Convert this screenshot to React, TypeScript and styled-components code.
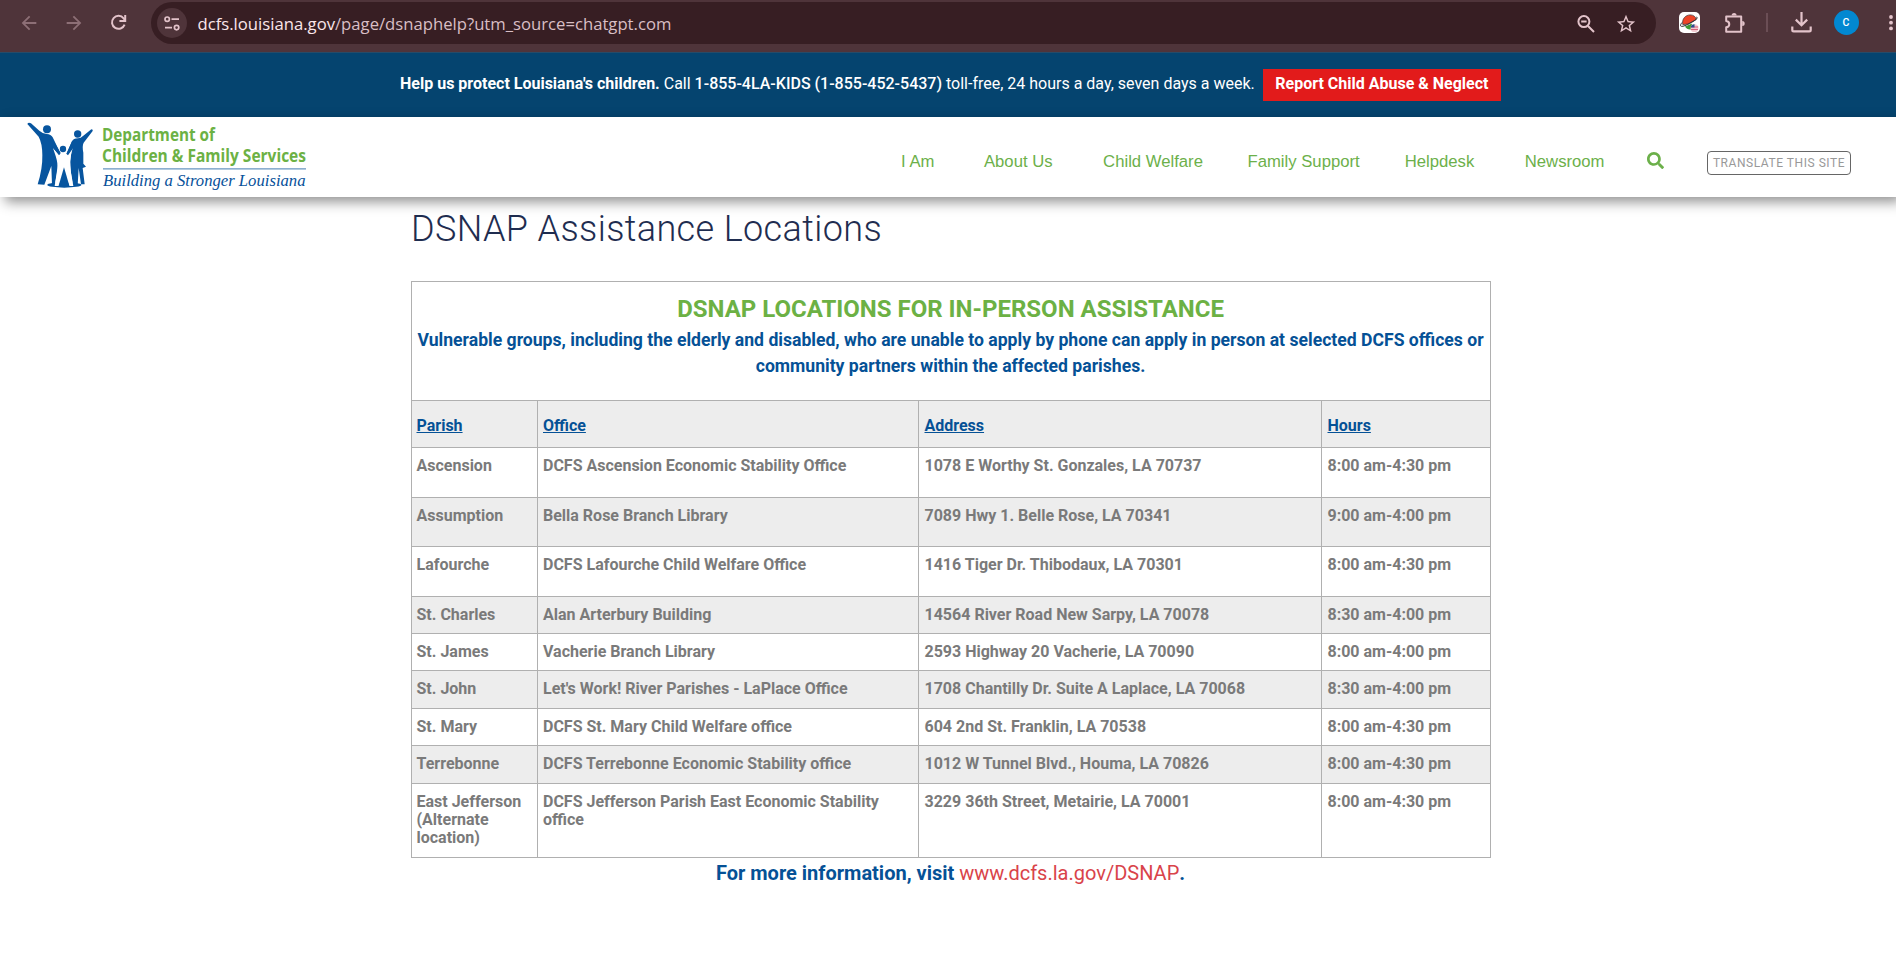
import React from "react";
import styled, { createGlobalStyle } from "styled-components";
import { MdArrowBack, MdArrowForward, MdStarBorder } from "react-icons/md";
import { FaSearch } from "react-icons/fa";

const GlobalStyle = createGlobalStyle`
  * { box-sizing: border-box; }
  html, body { margin: 0; background: #fff; overflow: hidden; }
  body { font-family: Roboto, "Liberation Sans", sans-serif; font-size: 16px; }
  a { text-decoration: none; color: inherit; }
`;

const Page = styled.div`
  height: 958px;
  display: flex;
  flex-direction: column;
  overflow: hidden;
`;

/* Browser toolbar */
const BrowserBar = styled.div`
  flex: none;
  display: flex;
  height: 52px;
  padding: 2px 0 0 6px;
  background: #4f343a;
  color: #e3c3ca;
  overflow: hidden;
`;

const ToolSlot = styled.div<{ $width?: number; $dim?: boolean }>`
  flex: none;
  width: ${(p) => p.$width ?? 45}px;
  height: 41px;
  display: flex;
  align-items: center;
  justify-content: center;
  color: ${(p) => (p.$dim ? "#8d6f76" : "inherit")};
`;

const AddressBar = styled.div`
  flex: none;
  width: 1505px;
  height: 42px;
  margin: 0 10px;
  padding: 0 19px 0 6px;
  border-radius: 21px;
  background: #371e23;
  display: flex;
  align-items: center;
`;

const SiteInfo = styled.span`
  width: 30px;
  height: 30px;
  border-radius: 50%;
  background: #4f343a;
  display: grid;
  place-items: center;
`;

const Url = styled.span`
  flex: 1;
  margin-left: 10.5px;
  padding-top: 1px;
  font: 16.68px/24px "Open Sans", "Noto Sans", sans-serif;
  color: #d9bfc5;
  b { font-weight: 400; color: #fbe6ea; }
`;

const AddressActions = styled.span`
  display: flex;
  align-items: center;
  gap: 20px;
  padding-top: 1px;
`;

const Divider = styled.span`
  width: 2px;
  height: 19px;
  background: #6b4e55;
`;

const Avatar = styled.span`
  width: 25px;
  height: 25px;
  border-radius: 50%;
  background: #0288d1;
  color: #fff;
  font-size: 10.5px;
  font-weight: 500;
  line-height: 25px;
  text-align: center;
`;

/* Hotline banner */
const Banner = styled.div`
  flex: none;
  height: 65px;
  border-top: 1px solid #274b68;
  background: #05446f;
  color: #fff;
  display: flex;
  justify-content: center;
  align-items: flex-start;
  padding-top: 16px;
  padding-left: 5px;
  line-height: 19px;
  white-space: nowrap;
`;

const BannerText = styled.p`
  margin: 5px 8px 0 0;
  b { font-weight: 700; }
  strong { font-weight: 500; }
`;

const ReportButton = styled.a`
  height: 32px;
  padding: 5px 12.5px 0;
  background: #e21b1b;
  font-weight: 700;
`;

/* Site header */
const Header = styled.header`
  flex: none;
  position: relative;
  height: 80px;
  display: flex;
  justify-content: space-between;
  background: #fff;
  box-shadow: 5px 5px 12px rgba(0, 0, 0, 0.43);
`;

const Nav = styled.nav`
  display: flex;
  align-items: flex-start;
  padding: 33px 45px 0 0;
  font: 16.7px/24px "Liberation Sans", Arial, sans-serif;
  color: #6cb04a;
`;

const NavLink = styled.a<{ $gap: number }>`
  margin-right: ${(p) => p.$gap}px;
`;

const SearchButton = styled.a`
  margin: 2px 43px 0 0;
  height: 17px;
  svg { display: block; }
`;

const Translate = styled.button`
  width: 144px;
  height: 24px;
  margin-top: 1px;
  padding: 0;
  border: 1px solid #666;
  border-radius: 4px;
  background: #fff;
  color: #999;
  font: 12px/22px Roboto, sans-serif;
  letter-spacing: 0.55px;
  white-space: nowrap;
`;

/* Page content */
const Content = styled.main`
  width: 1080px;
  margin-left: 411px;
`;

const Title = styled.h1`
  margin: 10px 0 0;
  height: 74px;
  font-size: 36px;
  font-weight: 300;
  line-height: 44px;
  letter-spacing: 0.38px;
  color: #1f2d50;
`;

const Table = styled.table`
  width: 1080px;
  table-layout: fixed;
  border-collapse: collapse;
  font-weight: 700;
  line-height: 18px;
  color: #7a7a7a;
  td, th { border: 1px solid #b0b0b0; }
`;

const IntroCell = styled.th`
  height: 119px;
  padding: 11px 5px 0 4px;
  vertical-align: top;
  text-align: center;
`;

const IntroHeading = styled.div`
  font-size: 24px;
  line-height: 32px;
  color: #6cb144;
`;

const IntroText = styled.div`
  margin: 2px -1px 0;
  font-size: 17.6px;
  line-height: 26px;
  color: #055196;
`;

const Row = styled.tr<{ $height: number; $shaded: boolean }>`
  height: ${(p) => p.$height}px;
  background: ${(p) => (p.$shaded ? "#ededed" : "#fff")};
`;

const HeadCell = styled.th`
  padding: 16px 4px 0 4.5px;
  text-align: left;
  vertical-align: top;
  text-decoration: underline;
  color: #055196;
  &:nth-child(2) { padding-left: 5px; }
  &:nth-child(n + 3) { padding-left: 5.5px; }
`;

const Cell = styled.td`
  padding: 9px 4px 0 4.5px;
  vertical-align: top;
  &:nth-child(2) { padding-left: 5px; }
  &:nth-child(n + 3) { padding-left: 5.5px; }
`;

const MoreInfo = styled.p`
  margin: 1px 1px 0 0;
  font-size: 20px;
  font-weight: 700;
  line-height: 28px;
  text-align: center;
  color: #055196;
  a { font-weight: 400; color: #d9434a; }
`;

type Location = [number, string, string, string, string];

const locations: Location[] = [
  [50, "Ascension", "DCFS Ascension Economic Stability Office", "1078 E Worthy St. Gonzales, LA 70737", "8:00 am-4:30 pm"],
  [49, "Assumption", "Bella Rose Branch Library", "7089 Hwy 1. Belle Rose, LA 70341", "9:00 am-4:00 pm"],
  [50, "Lafourche", "DCFS Lafourche Child Welfare Office", "1416 Tiger Dr. Thibodaux, LA 70301", "8:00 am-4:30 pm"],
  [37, "St. Charles", "Alan Arterbury Building", "14564 River Road New Sarpy, LA 70078", "8:30 am-4:00 pm"],
  [37, "St. James", "Vacherie Branch Library", "2593 Highway 20 Vacherie, LA 70090", "8:00 am-4:00 pm"],
  [38, "St. John", "Let's Work! River Parishes - LaPlace Office", "1708 Chantilly Dr. Suite A Laplace, LA 70068", "8:30 am-4:00 pm"],
  [37, "St. Mary", "DCFS St. Mary Child Welfare office", "604 2nd St. Franklin, LA 70538", "8:00 am-4:30 pm"],
  [38, "Terrebonne", "DCFS Terrebonne Economic Stability office", "1012 W Tunnel Blvd., Houma, LA 70826", "8:00 am-4:30 pm"],
  [74, "East Jefferson (Alternate location)", "DCFS Jefferson Parish East Economic Stability office", "3229 36th Street, Metairie, LA 70001", "8:00 am-4:30 pm"],
];

const navItems: [string, number][] = [
  ["I Am", 49.5],
  ["About Us", 50.5],
  ["Child Welfare", 44.5],
  ["Family Support", 45],
  ["Helpdesk", 50.5],
  ["Newsroom", 42.5],
];

const ReloadIcon = () => (
  <svg width="17" height="17" viewBox="0 0 17 17" fill="none" stroke="currentColor" strokeWidth="2">
    <path d="M14.6 10.6A6.5 6.5 0 1 1 13.6 4.3L15 6" />
    <path d="M15.2 1v6H9.4" />
  </svg>
);

const TuneIcon = () => (
  <svg width="16" height="15" viewBox="0 0 16 15" fill="none" stroke="currentColor" strokeWidth="1.7">
    <circle cx="3.2" cy="3.2" r="2.2" />
    <path d="M7.5 3.2H15M1 11.6h7" />
    <circle cx="12.6" cy="11.6" r="2.2" />
  </svg>
);

const ZoomOutIcon = () => (
  <svg width="18" height="18" viewBox="0 0 18 18" fill="none" stroke="currentColor" strokeWidth="2">
    <circle cx="6.9" cy="6.6" r="5.5" />
    <path d="M11 11l6 6M4.2 6.6h5.4" />
  </svg>
);

const PlanetIcon = () => (
  <svg width="21" height="21" viewBox="0 0 21 21">
    <rect width="21" height="21" rx="5" fill="#fff" />
    <path d="M6 14.500a6 6 0 0 0 6 3l1-6z" fill="#3f9b35" />
    <path d="M3.800 12.600C2.600 7 6.500 2.800 11.500 2.900c3 .1 5.200 1.900 5.800 4.500L9 12z" fill="#ee4427" stroke="#332d2d" strokeWidth=".7" />
    <path d="M3 10.500C-.5 15 2.500 15.500 8.500 12.500 15 9.500 20.500 5.500 17.300 5.100" fill="none" stroke="#2b2b30" strokeWidth="1" />
    <circle cx="15.500" cy="16.200" r="3.900" fill="#f2c9d0" />
    <path d="M12 15h7.200M12 17.500h7" stroke="#d9607a" strokeWidth="1" />
    <path d="M11.700 15.600a3.900 3.900 0 0 1 3.800-3.300v3.300z" fill="#28508e" />
  </svg>
);

const PuzzleIcon = () => (
  <svg width="22" height="22" viewBox="0 0 22 22" fill="none" stroke="currentColor" strokeWidth="2" strokeLinejoin="round">
    <path d="M2.200 4.400H17.200V19.800H2.200V15.300C6.300 14.800 6.300 9.600 2.200 9.100Z" />
    <path d="M7.600 3.500a2.500 2.500 0 0 1 5 0zM18.200 9.100a2.500 2.500 0 0 1 0 5z" fill="currentColor" stroke="none" />
  </svg>
);

const DownloadIcon = () => (
  <svg width="21" height="21" viewBox="0 0 21 21" fill="none" stroke="currentColor" strokeWidth="2.200">
    <path d="M10.500 0v13M4.800 7.600l5.700 5.700 5.700-5.700M1.300 14.500v3.400q0 1.400 1.400 1.400h15.600q1.400 0 1.400-1.400v-3.400" />
  </svg>
);

const DotsIcon = () => (
  <svg width="6" height="18" viewBox="0 0 6 18" fill="currentColor">
    <circle cx="3" cy="3" r="1.900" />
    <circle cx="3" cy="8.700" r="1.900" />
    <circle cx="3" cy="14.400" r="1.900" />
  </svg>
);

const LogoMark = styled.svg`
  display: block;
  overflow: visible;
`;

const Logo = () => (
  <LogoMark width="320" height="80" viewBox="0 0 320 80">
    <g transform="translate(20 -1.700) scale(.33333)" fill="#07559f">
      <ellipse cx="133" cy="209" rx="51" ry="8" />
      <circle cx="81" cy="42" r="12" />
      <path d="M22 26Q25 20 33 24L58 46Q68 55 80 56 93 57 98 66L121 113 118 119 109 113 113 130Q117 150 105 206L96 207 94 152 73 208 53 207Q68 160 67 120 67 84 56 64Z" />
      <circle cx="173" cy="56" r="11" />
      <path d="M214 42Q220 42 218 47L191 82Q186 92 190 112L190 145 198 154 188 158 194 207 183 207 176 158 173 210 158 207Q151 170 151 140L154 108 145 118 140 115 156 78Q160 69 174 69 182 69 190 61Z" />
      <path d="M99 98L116 117Q129 124 142 117L158 99 152 123Q147 142 151 160L160 212 147 212 132 156 117 212 104 212 112 160Q114 144 107 122Z" fill="#fff" />
      <path d="M100 76L122 113 117 120 97 94ZM156 78L158 100 144 120 139 115Z" />
      <circle cx="129" cy="101" r="9.500" />
      <path d="M132 156L149 214H115Z" />
    </g>
    <g fill="#6cb144" fontFamily="Open Sans, Noto Sans, sans-serif" fontWeight="700" fontSize="18">
      <text x="102" y="23.500" textLength="113" lengthAdjust="spacingAndGlyphs">Department of</text>
      <text x="102" y="45" textLength="204" lengthAdjust="spacingAndGlyphs">Children &amp; Family Services</text>
    </g>
    <path d="M103 51.900H306" stroke="#6795c0" strokeWidth="1.200" />
    <text x="103" y="69" fill="#07519a" fontFamily="Liberation Serif, serif" fontStyle="italic" fontSize="17.500" textLength="202.500" lengthAdjust="spacingAndGlyphs">Building a Stronger Louisiana</text>
  </LogoMark>
);

export default function App() {
  return (
    <Page>
      <GlobalStyle />
      <BrowserBar>
        <ToolSlot $dim><MdArrowBack size={22} /></ToolSlot>
        <ToolSlot $dim><MdArrowForward size={22} /></ToolSlot>
        <ToolSlot><ReloadIcon /></ToolSlot>
        <AddressBar>
          <SiteInfo><TuneIcon /></SiteInfo>
          <Url><b>dcfs.louisiana.gov</b>/page/dsnaphelp?utm_source=chatgpt.com</Url>
          <AddressActions>
            <ZoomOutIcon />
            <MdStarBorder size={22} />
          </AddressActions>
        </AddressBar>
        <ToolSlot $width={46}><PlanetIcon /></ToolSlot>
        <ToolSlot $width={46}><PuzzleIcon /></ToolSlot>
        <ToolSlot $width={17}><Divider /></ToolSlot>
        <ToolSlot $width={52}><DownloadIcon /></ToolSlot>
        <ToolSlot $width={38}><Avatar>C</Avatar></ToolSlot>
        <ToolSlot $width={52}><DotsIcon /></ToolSlot>
      </BrowserBar>
      <Banner>
        <BannerText>
          <b>Help us protect Louisiana's children.</b> Call <strong>1-855-4LA-KIDS (1-855-452-5437)</strong> toll-free, 24 hours a day, seven days a week.
        </BannerText>
        <ReportButton>Report Child Abuse &amp; Neglect</ReportButton>
      </Banner>
      <Header>
        <Logo />
        <Nav>
          {navItems.map(([label, gap]) => (
            <NavLink key={label} $gap={gap}>{label}</NavLink>
          ))}
          <SearchButton><FaSearch size={17} /></SearchButton>
          <Translate>TRANSLATE THIS SITE</Translate>
        </Nav>
      </Header>
      <Content>
        <Title>DSNAP Assistance Locations</Title>
        <Table>
          <colgroup>
            <col width="126" />
            <col width="381" />
            <col width="403" />
            <col width="169" />
          </colgroup>
          <tbody>
            <tr>
              <IntroCell colSpan={4}>
                <IntroHeading>DSNAP LOCATIONS FOR IN-PERSON ASSISTANCE</IntroHeading>
                <IntroText>
                  Vulnerable groups, including the elderly and disabled, who are unable to apply by phone can apply in person at selected DCFS offices or community partners within the affected parishes.
                </IntroText>
              </IntroCell>
            </tr>
            <Row $height={47} $shaded>
              <HeadCell>Parish</HeadCell>
              <HeadCell>Office</HeadCell>
              <HeadCell>Address</HeadCell>
              <HeadCell>Hours</HeadCell>
            </Row>
            {locations.map(([height, parish, office, address, hours], i) => (
              <Row key={parish} $height={height} $shaded={i % 2 === 1}>
                <Cell>{parish}</Cell>
                <Cell>{office}</Cell>
                <Cell>{address}</Cell>
                <Cell>{hours}</Cell>
              </Row>
            ))}
          </tbody>
        </Table>
        <MoreInfo>
          For more information, visit <a>www.dcfs.la.gov/DSNAP</a>.
        </MoreInfo>
      </Content>
    </Page>
  );
}
